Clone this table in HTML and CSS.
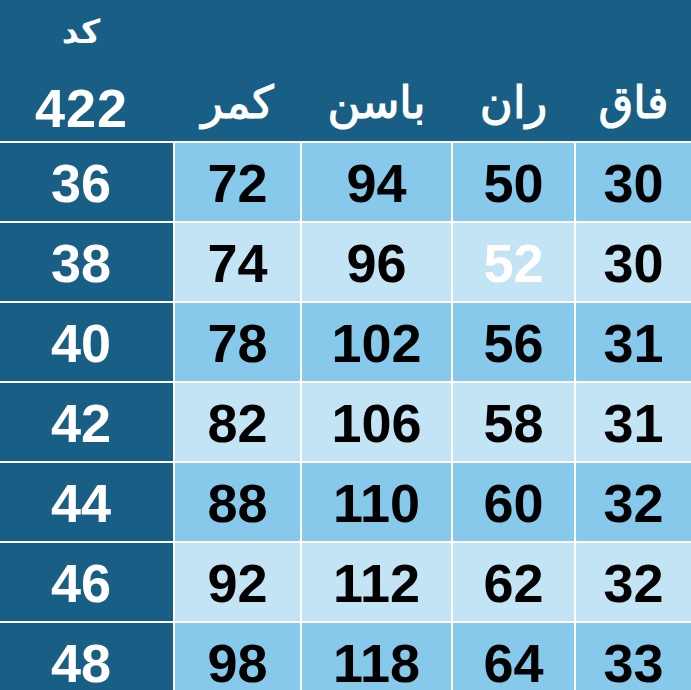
FILE: index.html
```html
<!DOCTYPE html>
<html lang="ar">
<head>
<meta charset="utf-8">
<link rel="stylesheet" href="styles.css">
</head>
<body>
<div class="sheet">
  <div class="head">
    <div class="code">
      <span class="code-label">كد</span>
      <span class="code-num">422</span>
    </div>
    <div class="label">كمر</div>
    <div class="label">باسن</div>
    <div class="label">ران</div>
    <div class="label">فاق</div>
  </div>
  <div class="grid">
    <div class="size">36</div><div class="c odd">72</div><div class="c odd">94</div><div class="c odd">50</div><div class="c odd">30</div>
    <div class="size">38</div><div class="c even">74</div><div class="c even">96</div><div class="c even white">52</div><div class="c even">30</div>
    <div class="size">40</div><div class="c odd">78</div><div class="c odd">102</div><div class="c odd">56</div><div class="c odd">31</div>
    <div class="size">42</div><div class="c even">82</div><div class="c even">106</div><div class="c even">58</div><div class="c even">31</div>
    <div class="size">44</div><div class="c odd">88</div><div class="c odd">110</div><div class="c odd">60</div><div class="c odd">32</div>
    <div class="size">46</div><div class="c even">92</div><div class="c even">112</div><div class="c even">62</div><div class="c even">32</div>
    <div class="size">48</div><div class="c odd">98</div><div class="c odd">118</div><div class="c odd">64</div><div class="c odd">33</div>
  </div>
</div>
</body>
</html>
```
FILE: styles.css
```css
html, body {
  margin: 0;
  padding: 0;
  background: #ffffff;
}
body {
  width: 691px;
  height: 690px;
  overflow: hidden;
  font-family: "Liberation Sans", Arial, sans-serif;
}
.sheet {
  display: flex;
  flex-direction: column;
  gap: 2px;
}
.head {
  height: 141px;
  background: #195e84;
  display: grid;
  grid-template-columns: 173px 125px 149px 121px 115px;
  column-gap: 2px;
  color: #ffffff;
}
.code {
  display: flex;
  flex-direction: column;
  align-items: center;
  padding-right: 11px;
}
.code-label {
  font-family: "DejaVu Sans", sans-serif;
  font-weight: bold;
  font-size: 33px;
  line-height: 1;
  margin-top: 15px;
}
.code-num {
  font-weight: bold;
  font-size: 54px;
  letter-spacing: 1px;
  margin-right: -1px;
  line-height: 1;
  margin-top: 33px;
}
.label {
  font-family: "DejaVu Sans", sans-serif;
  font-size: 45px;
  -webkit-text-stroke: 1.2px #ffffff;
  line-height: 1;
  display: flex;
  justify-content: center;
  align-items: flex-start;
  padding-top: 80px;
}
.grid {
  display: grid;
  grid-template-columns: 173px 125px 149px 121px 115px;
  grid-auto-rows: 78px;
  gap: 2px;
}
.size, .c {
  display: flex;
  align-items: center;
  justify-content: center;
  font-weight: bold;
  font-size: 54px;
  line-height: 1;
  padding-top: 2px;
}
.size {
  background: #195e84;
  color: #ffffff;
  padding-right: 11px;
}
.c {
  color: #000000;
}
.odd {
  background: #87c9ea;
}
.even {
  background: #c3e4f4;
}
.white {
  color: #ffffff;
}
```
